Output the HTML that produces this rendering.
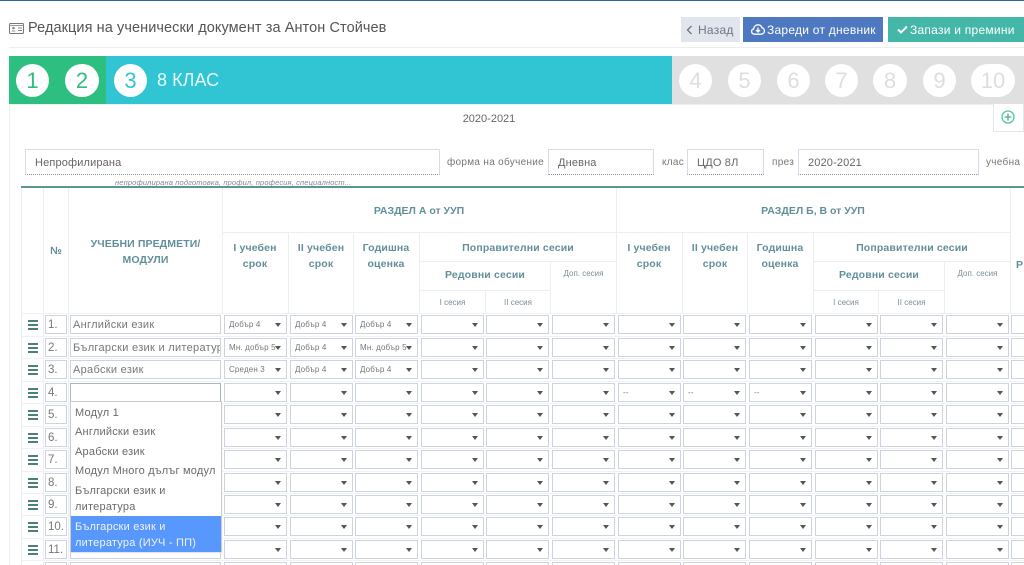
<!DOCTYPE html>
<html lang="bg"><head><meta charset="utf-8"><title>Редакция</title>
<style>
html{margin:0;padding:0;background:#fff;width:1024px;height:565px;overflow:hidden}
body{margin:0;padding:0;background:#fff;width:1024px;height:565px;overflow:hidden;position:relative;font-family:"Liberation Sans",sans-serif;color:#666;filter:blur(.3px)}
.a{position:absolute;white-space:nowrap}
.c{text-align:center}
.bar{position:absolute;top:56px;height:48px}
.n{position:absolute;top:63.5px;width:33px;height:33px;border-radius:17px;background:#fff;text-align:center;line-height:33px;font-size:22px;font-weight:normal}
.n.g{color:#dcdfdf}
.btn{position:absolute;top:17px;height:25px;line-height:27px;font-size:12px;letter-spacing:.25px;white-space:nowrap;color:#fff}
.inp{position:absolute;top:149px;height:24px;line-height:26px;background:#fff;border:1px solid #d9dce8;border-bottom:1px dotted #7f9298;box-sizing:content-box;padding-left:9px;font-size:11px;letter-spacing:.15px;color:#666}
.lb{position:absolute;top:157px;font-size:10px;letter-spacing:.3px;color:#777;white-space:nowrap}
.vl{position:absolute;width:1px;background:#e9eff3}
.hl{position:absolute;height:1px;background:#e9eff3}
.h{position:absolute;text-align:center;font-weight:bold;color:#62909a;white-space:nowrap}
.y{font-size:10.5px;line-height:16px;top:240px;width:64px;letter-spacing:.15px}
.sm{font-size:8px;color:#7b8c96;font-weight:normal}
.r{position:absolute;left:0;width:1024px;height:19px}
.r:before{content:"";position:absolute;left:28px;top:5px;width:10px;height:2px;background:#4d7f7b;box-shadow:0 4px 0 #4d7f7b,0 8px 0 #4d7f7b}
.r:after{content:"";position:absolute;left:22px;right:0;top:-2px;height:1px;background:#eef2f5}
.k,.m,.s{position:absolute;top:0;height:17px;line-height:19px;background:#fff;border:1px solid #ced3e2;white-space:nowrap;overflow:hidden;color:#777}
.k{left:45px;width:18px;padding-left:2px;font-size:11.5px}
.m{left:70px;width:147px;padding-left:2px;font-size:11px;letter-spacing:.3px}
.s{font-size:8px;padding-left:4px;box-sizing:content-box;width:57px;letter-spacing:.15px;line-height:18px}
.s:after{content:"";position:absolute;right:5px;top:7px;border:3.5px solid transparent;border-top:4px solid #555;border-bottom:0}
.s1{left:224px}.s2{left:290px}.s3{left:355px}.s4{left:421px}.s5{left:486px}.s6{left:552px}.s7{left:618px}.s8{left:683px}.s9{left:749px}.s10{left:815px}.s11{left:880px}.s12{left:946px}.s13{left:1011px}
.dd{position:absolute;left:70px;top:401px;width:152px;height:151px;background:#fff;border:1px solid #c7ccd4;box-sizing:border-box;font-size:11px;letter-spacing:.22px;color:#6a6a6a;box-shadow:0 1px 1px #ddd}
.dd div{line-height:16.5px}
.it{padding:1.5px 4px}
.sel{position:absolute;left:0;right:0;top:114px;height:36px;background:#5897fb;color:#eef4ff;padding:2.5px 4px 0;box-sizing:border-box}
</style></head><body>
<div class="a" style="left:0;top:0;width:1024px;height:1px;background:#2c6a94"></div>

<svg class="a" style="left:9px;top:23px" width="15" height="11" viewBox="0 0 15 11"><rect x=".5" y=".5" width="14" height="10" rx="1" fill="none" stroke="#777"/><path d="M.5 2.500h14" stroke="#999"/><circle cx="4.500" cy="5" r="1.300" fill="#888"/><path d="M2.500 8.500c.3-1.500 3.700-1.500 4 0" fill="#888"/><path d="M9 5h4M9 7.500h4" stroke="#888"/></svg>
<div class="a" style="left:28px;top:20px;font-size:14.5px;line-height:17px;color:#555;letter-spacing:.08px">Редакция на ученически документ за Антон Стойчев</div>
<div class="a" style="left:9px;top:47px;width:1015px;height:1px;background:#eee"></div>

<div class="btn" style="left:681px;width:59px;background:#e1e5ed;color:#6f7680"><svg class="a" style="left:5px;top:8px" width="7" height="10" viewBox="0 0 7 10"><path d="M5.500 1L1.500 5l4 4" fill="none" stroke="#666" stroke-width="1.200"/></svg><span class="a" style="left:17px">Назад</span></div>
<div class="btn" style="left:743px;width:140px;background:#4e78c0"><svg class="a" style="left:8px;top:7px" width="14" height="11" viewBox="0 0 14 11"><path d="M3.500 10.200C1.600 10.200.6 8.900.6 7.500c0-1.300.9-2.300 2-2.500C2.900 2.500 4.700.8 7 .8c2 0 3.500 1.300 4 3 1.400.2 2.400 1.500 2.400 3 0 1.800-1.300 3.400-3.200 3.400z" fill="none" stroke="#fff" stroke-width="1.300"/><path d="M7 3.500v4M5 6l2 2 2-2" fill="none" stroke="#fff" stroke-width="1.300"/></svg><span class="a" style="left:24px">Зареди от дневник</span></div>
<div class="btn" style="left:888px;width:136px;background:#45b7a8"><svg class="a" style="left:9px;top:8px" width="11" height="9" viewBox="0 0 11 9"><path d="M1 4.500l3 3 6-6" fill="none" stroke="#fff" stroke-width="2"/></svg><span class="a" style="left:22px">Запази и премини</span></div>

<div class="bar" style="left:9px;width:97px;background:#2dbf80"></div>
<div class="bar" style="left:106px;width:566px;background:#31c5d4"></div>
<div class="bar" style="left:672px;width:352px;background:#e0e0e0"></div>
<div class="n" style="left:16px;color:#2dbf80">1</div>
<div class="n" style="left:65px;width:34px;color:#2dbf80">2</div>
<div class="n" style="left:114px;color:#31c5d4">3</div>
<div class="a" style="left:157px;top:68px;font-size:18px;line-height:24px;color:#e6f9fb;letter-spacing:.05px">8 КЛАС</div>
<div class="n g" style="left:679px">4</div>
<div class="n g" style="left:728px">5</div>
<div class="n g" style="left:777px">6</div>
<div class="n g" style="left:825px">7</div>
<div class="n g" style="left:873px;width:34px">8</div>
<div class="n g" style="left:923px">9</div>
<div class="n g" style="left:971px;width:44px">10</div>

<div class="a" style="left:9px;top:104px;width:1px;height:461px;background:#eee"></div>
<div class="a" style="left:9px;top:104px;width:1015px;height:1px;background:#eee"></div>
<div class="a" style="left:993px;top:104px;width:31px;height:28px;background:#fff;border:1px solid #e6e6e6;border-top:0;box-sizing:border-box"></div>
<svg class="a" style="left:1001px;top:110px" width="14" height="14" viewBox="0 0 14 14"><circle cx="7" cy="7" r="6" fill="none" stroke="#4cc99a" stroke-width="1.300"/><path d="M7 3.500v7M3.500 7h7" stroke="#4caf85" stroke-width="1.300"/></svg>
<div class="a c" style="left:449px;top:112px;width:80px;font-size:11px;line-height:14px;color:#666">2020-2021</div>

<div class="inp" style="left:25px;width:404px">Непрофилирана</div>
<div class="lb" style="left:447px">форма на обучение</div>
<div class="inp" style="left:548px;width:95px">Дневна</div>
<div class="lb" style="left:662px">клас</div>
<div class="inp" style="left:687px;width:66px">ЦДО 8Л</div>
<div class="lb" style="left:772px">през</div>
<div class="inp" style="left:798px;width:170px">2020-2021</div>
<div class="lb" style="left:986px">учебна</div>
<div class="a" style="left:115px;top:178px;font-size:7.5px;line-height:10px;font-style:italic;color:#808a90;letter-spacing:.14px">непрофилирана подготовка, профил, професия, специалност...</div>
<div class="a" style="left:21px;top:186px;width:1003px;height:2px;background:#5d9590"></div>

<div class="vl" style="left:21px;top:188px;height:377px"></div>
<div class="vl" style="left:43px;top:188px;height:377px"></div>
<div class="vl" style="left:68px;top:188px;height:377px"></div>
<div class="vl" style="left:222px;top:188px;height:126px"></div>
<div class="vl" style="left:288px;top:232px;height:82px"></div>
<div class="vl" style="left:353px;top:232px;height:82px"></div>
<div class="vl" style="left:419px;top:232px;height:82px"></div>
<div class="vl" style="left:485px;top:290px;height:24px"></div>
<div class="vl" style="left:550px;top:261px;height:53px"></div>
<div class="vl" style="left:616px;top:188px;height:126px"></div>
<div class="vl" style="left:682px;top:232px;height:82px"></div>
<div class="vl" style="left:747px;top:232px;height:82px"></div>
<div class="vl" style="left:813px;top:232px;height:82px"></div>
<div class="vl" style="left:878px;top:290px;height:24px"></div>
<div class="vl" style="left:944px;top:261px;height:53px"></div>
<div class="vl" style="left:1010px;top:188px;height:126px"></div>
<div class="hl" style="left:222px;top:232px;width:788px"></div>
<div class="hl" style="left:419px;top:261px;width:197px"></div>
<div class="hl" style="left:813px;top:261px;width:197px"></div>
<div class="hl" style="left:419px;top:290px;width:131px"></div>
<div class="hl" style="left:813px;top:290px;width:131px"></div>

<div class="h" style="left:222px;top:204px;width:394px;font-size:10.5px;line-height:14px">РАЗДЕЛ А от УУП</div>
<div class="h" style="left:616px;top:204px;width:394px;font-size:10.5px;line-height:14px">РАЗДЕЛ Б, В от УУП</div>
<div class="h" style="left:44px;top:244px;width:24px;font-size:10.5px;line-height:14px">№</div>
<div class="h" style="left:69px;top:236px;width:153px;font-size:10.5px;line-height:16px;letter-spacing:.1px">УЧЕБНИ ПРЕДМЕТИ/<br>МОДУЛИ</div>
<div class="h y" style="left:223px">I учебен<br>срок</div>
<div class="h y" style="left:289px">II учебен<br>срок</div>
<div class="h y" style="left:354px">Годишна<br>оценка</div>
<div class="h y" style="left:617px">I учебен<br>срок</div>
<div class="h y" style="left:683px">II учебен<br>срок</div>
<div class="h y" style="left:748px">Годишна<br>оценка</div>
<div class="h y" style="left:420px;width:196px">Поправителни сесии</div>
<div class="h y" style="left:814px;width:196px">Поправителни сесии</div>
<div class="h y" style="left:420px;width:130px;top:267px">Редовни сесии</div>
<div class="h y" style="left:814px;width:130px;top:267px">Редовни сесии</div>
<div class="h sm" style="left:551px;width:65px;top:269px;line-height:10px">Доп. сесия</div>
<div class="h sm" style="left:945px;width:65px;top:269px;line-height:10px">Доп. сесия</div>
<div class="h sm" style="left:420px;width:65px;top:298px;line-height:10px">I сесия</div>
<div class="h sm" style="left:486px;width:64px;top:298px;line-height:10px">II сесия</div>
<div class="h sm" style="left:814px;width:64px;top:298px;line-height:10px">I сесия</div>
<div class="h sm" style="left:879px;width:65px;top:298px;line-height:10px">II сесия</div>
<div class="h" style="left:1016px;top:257px;font-size:10.5px;line-height:16px">Р</div>

<div class="r" style="top:315px"><span class="k">1.</span><span class="m">Английски език</span><span class="s s1">Добър 4</span><span class="s s2">Добър 4</span><span class="s s3">Добър 4</span><span class="s s4"></span><span class="s s5"></span><span class="s s6"></span><span class="s s7"></span><span class="s s8"></span><span class="s s9"></span><span class="s s10"></span><span class="s s11"></span><span class="s s12"></span><span class="s s13"></span></div>
<div class="r" style="top:338px"><span class="k">2.</span><span class="m">Български език и литература</span><span class="s s1">Мн. добър 5</span><span class="s s2">Добър 4</span><span class="s s3">Мн. добър 5</span><span class="s s4"></span><span class="s s5"></span><span class="s s6"></span><span class="s s7"></span><span class="s s8"></span><span class="s s9"></span><span class="s s10"></span><span class="s s11"></span><span class="s s12"></span><span class="s s13"></span></div>
<div class="r" style="top:360px"><span class="k">3.</span><span class="m">Арабски език</span><span class="s s1">Среден 3</span><span class="s s2">Добър 4</span><span class="s s3">Добър 4</span><span class="s s4"></span><span class="s s5"></span><span class="s s6"></span><span class="s s7"></span><span class="s s8"></span><span class="s s9"></span><span class="s s10"></span><span class="s s11"></span><span class="s s12"></span><span class="s s13"></span></div>
<div class="r" style="top:383px"><span class="k">4.</span><span class="m" style="border-color:#aab5c4"></span><span class="s s1"></span><span class="s s2"></span><span class="s s3"></span><span class="s s4"></span><span class="s s5"></span><span class="s s6"></span><span class="s s7">--</span><span class="s s8">--</span><span class="s s9">--</span><span class="s s10"></span><span class="s s11"></span><span class="s s12"></span><span class="s s13"></span></div>
<div class="r" style="top:405px"><span class="k">5.</span><span class="m"></span><span class="s s1"></span><span class="s s2"></span><span class="s s3"></span><span class="s s4"></span><span class="s s5"></span><span class="s s6"></span><span class="s s7"></span><span class="s s8"></span><span class="s s9"></span><span class="s s10"></span><span class="s s11"></span><span class="s s12"></span><span class="s s13"></span></div>
<div class="r" style="top:428px"><span class="k">6.</span><span class="m"></span><span class="s s1"></span><span class="s s2"></span><span class="s s3"></span><span class="s s4"></span><span class="s s5"></span><span class="s s6"></span><span class="s s7"></span><span class="s s8"></span><span class="s s9"></span><span class="s s10"></span><span class="s s11"></span><span class="s s12"></span><span class="s s13"></span></div>
<div class="r" style="top:450px"><span class="k">7.</span><span class="m"></span><span class="s s1"></span><span class="s s2"></span><span class="s s3"></span><span class="s s4"></span><span class="s s5"></span><span class="s s6"></span><span class="s s7"></span><span class="s s8"></span><span class="s s9"></span><span class="s s10"></span><span class="s s11"></span><span class="s s12"></span><span class="s s13"></span></div>
<div class="r" style="top:473px"><span class="k">8.</span><span class="m"></span><span class="s s1"></span><span class="s s2"></span><span class="s s3"></span><span class="s s4"></span><span class="s s5"></span><span class="s s6"></span><span class="s s7"></span><span class="s s8"></span><span class="s s9"></span><span class="s s10"></span><span class="s s11"></span><span class="s s12"></span><span class="s s13"></span></div>
<div class="r" style="top:495px"><span class="k">9.</span><span class="m"></span><span class="s s1"></span><span class="s s2"></span><span class="s s3"></span><span class="s s4"></span><span class="s s5"></span><span class="s s6"></span><span class="s s7"></span><span class="s s8"></span><span class="s s9"></span><span class="s s10"></span><span class="s s11"></span><span class="s s12"></span><span class="s s13"></span></div>
<div class="r" style="top:517px"><span class="k">10.</span><span class="m"></span><span class="s s1"></span><span class="s s2"></span><span class="s s3"></span><span class="s s4"></span><span class="s s5"></span><span class="s s6"></span><span class="s s7"></span><span class="s s8"></span><span class="s s9"></span><span class="s s10"></span><span class="s s11"></span><span class="s s12"></span><span class="s s13"></span></div>
<div class="r" style="top:540px"><span class="k">11.</span><span class="m"></span><span class="s s1"></span><span class="s s2"></span><span class="s s3"></span><span class="s s4"></span><span class="s s5"></span><span class="s s6"></span><span class="s s7"></span><span class="s s8"></span><span class="s s9"></span><span class="s s10"></span><span class="s s11"></span><span class="s s12"></span><span class="s s13"></span></div>
<div class="r" style="top:562px"><span class="k"></span><span class="m"></span><span class="s s1"></span><span class="s s2"></span><span class="s s3"></span><span class="s s4"></span><span class="s s5"></span><span class="s s6"></span><span class="s s7"></span><span class="s s8"></span><span class="s s9"></span><span class="s s10"></span><span class="s s11"></span><span class="s s12"></span><span class="s s13"></span></div>

<div class="dd">
<div class="it" style="margin-top:1px">Модул 1</div>
<div class="it">Английски език</div>
<div class="it">Арабски език</div>
<div class="it">Модул Много дълъг модул</div>
<div class="it">Български език и<br>литература</div>
<div class="sel">Български език и<br>литература (ИУЧ - ПП)</div>
</div>
</body></html>
